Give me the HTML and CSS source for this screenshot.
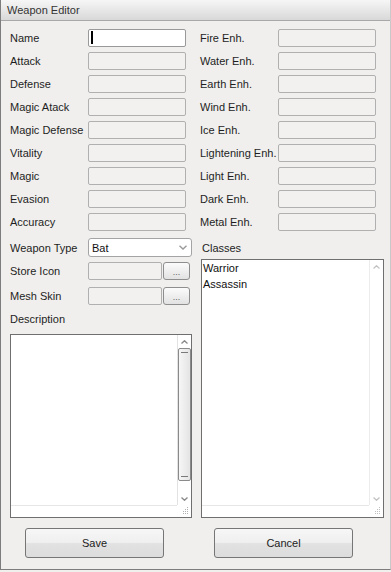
FILE: index.html
```html
<!DOCTYPE html>
<html>
<head>
<meta charset="utf-8">
<title>Weapon Editor</title>
<link rel="stylesheet" href="styles.css">
</head>
<body>
<div class="window">
  <div class="titlebar">Weapon Editor</div>
  <div class="content">
    <div class="col">
      <div class="row"><span class="lbl">Name</span><div class="field active"><span class="caret"></span></div></div>
      <div class="row"><span class="lbl">Attack</span><div class="field"></div></div>
      <div class="row"><span class="lbl">Defense</span><div class="field"></div></div>
      <div class="row"><span class="lbl">Magic Atack</span><div class="field"></div></div>
      <div class="row"><span class="lbl">Magic Defense</span><div class="field"></div></div>
      <div class="row"><span class="lbl">Vitality</span><div class="field"></div></div>
      <div class="row"><span class="lbl">Magic</span><div class="field"></div></div>
      <div class="row"><span class="lbl">Evasion</span><div class="field"></div></div>
      <div class="row"><span class="lbl">Accuracy</span><div class="field"></div></div>
      <div class="row type"><span class="lbl">Weapon Type</span>
        <div class="select"><span>Bat</span>
          <svg class="drop" width="8" height="5" viewBox="0 0 8 5"><path d="M0.5 0.8 L4 4 L7.5 0.8" fill="none" stroke="#9a9a9a" stroke-width="1.4"/></svg>
        </div>
      </div>
      <div class="row file"><span class="lbl">Store Icon</span><div class="field short"></div><div class="browse">...</div></div>
      <div class="row file"><span class="lbl">Mesh Skin</span><div class="field short"></div><div class="browse">...</div></div>
      <div class="caption">Description</div>
      <div class="textbox desc">
        <div class="area"></div>
        <div class="vscroll">
          <div class="arrow"><svg width="7" height="4" viewBox="0 0 7 4"><path d="M0.5 3.5 L3.5 0.7 L6.5 3.5" fill="none" stroke="#8a8a8a" stroke-width="1.3"/></svg></div>
          <div class="thumb"></div>
          <div class="spacer"></div>
          <div class="arrow"><svg width="7" height="4" viewBox="0 0 7 4"><path d="M0.5 0.5 L3.5 3.3 L6.5 0.5" fill="none" stroke="#8a8a8a" stroke-width="1.3"/></svg></div>
        </div>
        <div class="hbar"></div>
        <div class="grip"><svg width="8" height="8" viewBox="0 0 8 8" fill="#b0b0b0"><rect x="6" y="0" width="1" height="1"/><rect x="4" y="2" width="1" height="1"/><rect x="6" y="2" width="1" height="1"/><rect x="2" y="4" width="1" height="1"/><rect x="4" y="4" width="1" height="1"/><rect x="6" y="4" width="1" height="1"/><rect x="2" y="6" width="1" height="1"/><rect x="4" y="6" width="1" height="1"/><rect x="6" y="6" width="1" height="1"/></svg></div>
      </div>
    </div>
    <div class="col">
      <div class="row"><span class="lbl">Fire Enh.</span><div class="field"></div></div>
      <div class="row"><span class="lbl">Water Enh.</span><div class="field"></div></div>
      <div class="row"><span class="lbl">Earth Enh.</span><div class="field"></div></div>
      <div class="row"><span class="lbl">Wind Enh.</span><div class="field"></div></div>
      <div class="row"><span class="lbl">Ice Enh.</span><div class="field"></div></div>
      <div class="row"><span class="lbl">Lightening Enh.</span><div class="field"></div></div>
      <div class="row"><span class="lbl">Light Enh.</span><div class="field"></div></div>
      <div class="row"><span class="lbl">Dark Enh.</span><div class="field"></div></div>
      <div class="row"><span class="lbl">Metal Enh.</span><div class="field"></div></div>
      <div class="caption classes">Classes</div>
      <div class="textbox list">
        <div class="area items">
          <div>Warrior</div>
          <div>Assassin</div>
        </div>
        <div class="vscroll light">
          <div class="arrow"><svg width="7" height="4" viewBox="0 0 7 4"><path d="M0.5 3.5 L3.5 0.7 L6.5 3.5" fill="none" stroke="#c4c4c4" stroke-width="1.3"/></svg></div>
          <div class="spacer"></div>
          <div class="arrow"><svg width="7" height="4" viewBox="0 0 7 4"><path d="M0.5 0.5 L3.5 3.3 L6.5 0.5" fill="none" stroke="#c4c4c4" stroke-width="1.3"/></svg></div>
        </div>
        <div class="hbar"></div>
        <div class="grip"><svg width="8" height="8" viewBox="0 0 8 8" fill="#c0c0c0"><rect x="6" y="0" width="1" height="1"/><rect x="4" y="2" width="1" height="1"/><rect x="6" y="2" width="1" height="1"/><rect x="2" y="4" width="1" height="1"/><rect x="4" y="4" width="1" height="1"/><rect x="6" y="4" width="1" height="1"/><rect x="2" y="6" width="1" height="1"/><rect x="4" y="6" width="1" height="1"/><rect x="6" y="6" width="1" height="1"/></svg></div>
      </div>
    </div>
  </div>
  <div class="actions">
    <button class="btn">Save</button>
    <button class="btn">Cancel</button>
  </div>
</div>
</body>
</html>
```
FILE: styles.css
```css
* { box-sizing: border-box; }
html, body { margin: 0; background: #f0efed; }
body {
  font-family: "Liberation Sans", Arial, sans-serif;
  font-size: 11px;
  color: #1e1e1e;
}
.window {
  width: 391px;
  height: 570px;
  border-left: 1px solid #7d7d7d;
  border-right: 1px solid #c9c9c9;
  border-bottom: 1px solid #7d7d7d;
  background: #f0efed;
  display: flex;
  flex-direction: column;
}
.titlebar {
  height: 21px;
  border-bottom: 1px solid #a8a8a8;
  background: linear-gradient(#f6f6f6, #d8d8d8);
  padding: 1px 0 0 6px;
  line-height: 19px;
  color: #333;
}
.content {
  display: grid;
  grid-template-columns: 182px 184px;
  column-gap: 8px;
  padding: 5px 0 0 9px;
}
.col { display: flex; flex-direction: column; }
.row { display: flex; align-items: center; height: 23px; flex: none; }
.lbl { width: 78px; flex: none; white-space: nowrap; }
.field {
  width: 98px;
  height: 18px;
  flex: none;
  border: 1px solid #b0b0b0;
  border-radius: 2px;
  background: #f2f1ef;
}
.field.active {
  background: #fff;
  border-color: #999;
  padding: 1px 0 0 2px;
}
.caret { display: block; width: 2px; height: 13px; background: #000; }
.row.type { height: 29px; }
.select {
  width: 104px;
  height: 19px;
  border: 1px solid #a4a4a4;
  border-radius: 3px;
  background: #fff;
  display: flex;
  align-items: center;
  justify-content: space-between;
  padding: 0 4px 0 3px;
  color: #111;
}
.row.file { height: 18px; }
.row.file + .row.file { margin-top: 7px; }
.field.short { width: 74px; }
.browse {
  width: 27px;
  height: 18px;
  margin-left: 1px;
  border: 1px solid #8e8e8e;
  border-radius: 3px;
  background: linear-gradient(#fbfbfb, #e2e2e2);
  font-size: 9px;
  color: #666;
  text-align: center;
  line-height: 19px;
}
.caption { height: 28px; display: flex; align-items: center; flex: none; }
.caption.classes { height: 26px; padding: 4px 0 0 2px; }
.textbox {
  display: grid;
  grid-template-columns: 1fr 14px;
  grid-template-rows: 1fr 12px;
  border: 1px solid #6f6f6f;
  background: #fff;
  flex: none;
}
.textbox.desc { height: 184px; margin-top: 1px; }
.textbox.list { height: 259px; width: 183px; margin-left: 1px; }
.items { padding-left: 1px; line-height: 16px; color: #111; }
.vscroll {
  border-left: 1px solid #e2e2e2;
  display: flex;
  flex-direction: column;
  align-items: stretch;
}
.vscroll.light { border-left-color: #ececec; }
.arrow {
  height: 13px;
  flex: none;
  display: flex;
  align-items: center;
  justify-content: center;
}
.thumb {
  height: 133px;
  flex: none;
  border: 1px solid #8a8a8a;
  border-radius: 2px;
  background: linear-gradient(90deg, #f6f6f6, #e4e4e4);
  display: flex;
  flex-direction: column;
  justify-content: space-between;
  align-items: center;
  padding: 3px 0;
}
.thumb::before, .thumb::after {
  content: "";
  width: 7px;
  height: 1px;
  background: #7a7a7a;
}
.spacer { flex: 1; }
.hbar { border-top: 1px solid #e6e6e6; }
.grip {
  display: flex;
  align-items: flex-end;
  justify-content: flex-end;
  padding: 0 2px 2px 0;
}
.actions {
  display: flex;
  gap: 50px;
  padding-left: 24px;
  margin-top: 10px;
}
.btn {
  width: 139px;
  height: 30px;
  border: 1px solid #767676;
  border-radius: 3px;
  background: linear-gradient(#f7f7f7 0%, #efefef 48%, #e2e2e2 52%, #dcdcdc 100%);
  font-family: "Liberation Sans", Arial, sans-serif;
  font-size: 11px;
  color: #222;
  padding: 0;
}
```
